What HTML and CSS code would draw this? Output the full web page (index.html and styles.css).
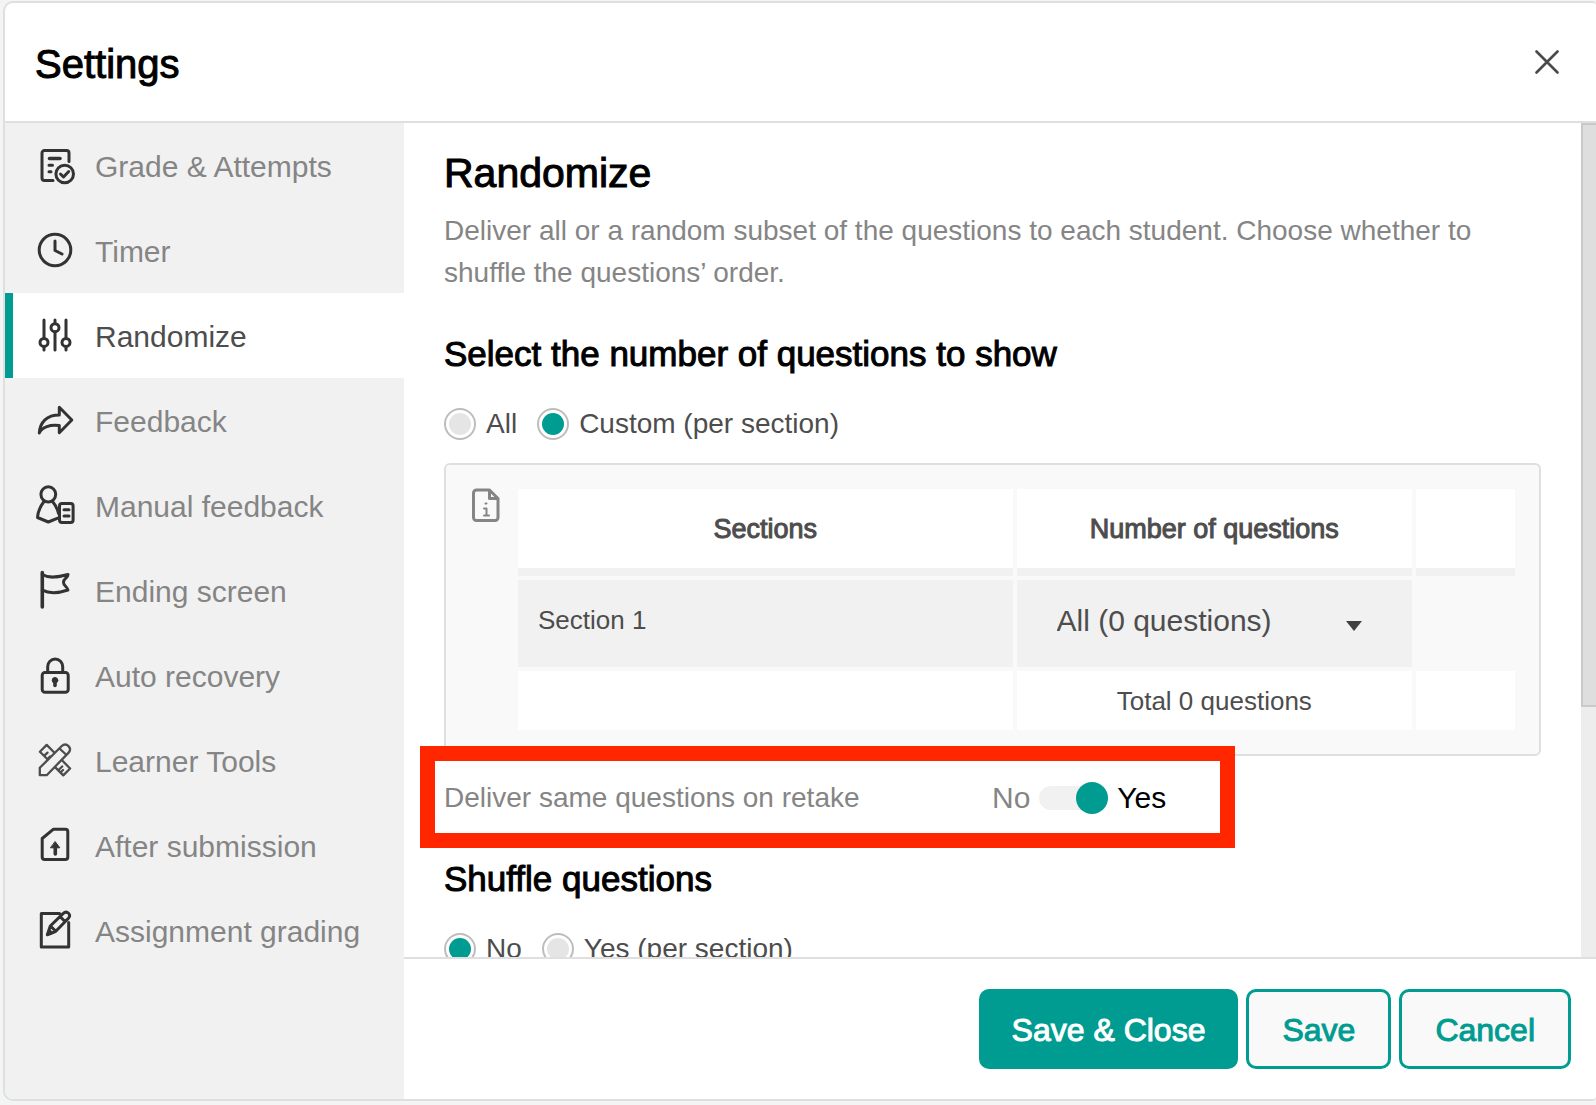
FILE: index.html
```html
<!DOCTYPE html>
<html lang="en">
<head>
    <meta charset="UTF-8">
    <meta name="viewport" content="width=device-width, initial-scale=1.0">
    <title>Settings</title>
    <link rel="stylesheet" href="styles.css">
</head>
<body>
    <div class="modal">
        <header class="modal-header">
            <h1>Settings</h1>
            <button type="button" class="close" aria-label="Close">
                <svg width="24" height="24" viewBox="0 0 24 24"><path d="M1.5 1.5l21 21M22.5 1.5l-21 21"/></svg>
            </button>
        </header>
        <div class="modal-body">
            <nav class="sidebar">
                <a href="#grade">
                    <svg class="icon" viewBox="0 0 40 40"><path d="M34 16.500V8a2.500 2.500 0 0 0-2.500-2.500h-22A2.500 2.500 0 0 0 7 8v25a2.500 2.500 0 0 0 2.500 2.500H18M14 20.300h3.500M14 26.700h2"/><path class="thick" d="M14.500 13.500h10.500"/><circle cx="29.700" cy="29" r="8.800"/><path d="M25.500 29l3 3 5.200-5.500"/></svg>
                    Grade &amp; Attempts
                </a>
                <a href="#timer">
                    <svg class="icon" viewBox="0 0 40 40"><circle cx="20" cy="20" r="15.800"/><path d="M20 11v9.500l7 3.500"/></svg>
                    Timer
                </a>
                <a href="#randomize" class="active">
                    <svg class="icon" viewBox="0 0 40 40"><path d="M9 5v18.500M9 31.500V35M20 5v3.500M20 17v18M31 5v18.500M31 31.500V35"/><circle cx="9" cy="27.400" r="4"/><circle cx="20" cy="12.700" r="4"/><circle cx="31" cy="27.400" r="4"/></svg>
                    Randomize
                </a>
                <a href="#feedback">
                    <svg class="icon" viewBox="0 0 40 40"><path d="M24.300 7.300L36.800 20 24.300 32.700V25.500C15 24.300 7 27 4.300 33 5 22 12 15 24.300 15Z"/></svg>
                    Feedback
                </a>
                <a href="#manual">
                    <svg class="icon" viewBox="0 0 40 40"><ellipse cx="13.300" cy="9.300" rx="7.400" ry="7.600"/><path d="M9 16.500C5.500 21 3 26 2.500 32.500L13.300 37l9.500-3.800M17.500 16.500c3 3.500 5 7.500 6 12"/><rect x="24.500" y="18.500" width="13.600" height="19" rx="2.500"/><path d="M29 24.700h5M29 31h5"/></svg>
                    Manual feedback
                </a>
                <a href="#ending">
                    <svg class="icon" viewBox="0 0 40 40"><path class="thick" d="M7.300 2.500V37"/><path d="M7.300 4.500C14 8.500 22 7.500 33 4.500 33 8 28.500 8.500 28.500 12.300S32 16 33 20C24 23 15 24 7.300 20.200"/></svg>
                    Ending screen
                </a>
                <a href="#recovery">
                    <svg class="icon" viewBox="0 0 40 40"><rect x="7.200" y="17.500" width="26" height="19.700" rx="2.800"/><path d="M12.700 17.500v-6a7.500 7.500 0 0 1 15 0v6"/><circle class="solid" cx="20" cy="25.300" r="2.800"/><path class="thick" d="M20 25v5.500"/></svg>
                    Auto recovery
                </a>
                <a href="#tools">
                    <svg class="icon thin" viewBox="0 0 40 40"><path d="M4.800 35.200v-7.400L26.500 6.300c2.300-2.200 5-2.200 7-.2s1.900 4.700-.3 7L11.700 35.200ZM24.500 8.500l7 6.500M19 12.300L11.700 4.900 4.900 11.700l7.600 7.600M27.500 20.800l7.600 7.700-6.800 6.900-8-8M9.300 15.600l3.200-3M13.500 18l1.500-1.500M24 29.500l3.200-3M26.500 31.500l1.500-1.500"/></svg>
                    Learner Tools
                </a>
                <a href="#submission">
                    <svg class="icon" viewBox="0 0 40 40"><path d="M18.500 4.200H30.300a2.500 2.500 0 0 1 2.500 2.500V32a2.500 2.500 0 0 1-2.500 2.500H9.700A2.500 2.500 0 0 1 7.200 32V13.500Z"/><path class="solid" d="M20.300 16.800l4.500 6h-9Z"/><path class="thick" d="M20.300 22v7"/></svg>
                    After submission
                </a>
                <a href="#grading">
                    <svg class="icon" viewBox="0 0 40 40"><path d="M24.500 3.600H6.300V37h27.400V12.500M12.300 24.800l3-8.800L28 3.600c2-1.800 4-1.800 5.500-.3s1.400 3.400-.3 5.200L20.800 21.300ZM25 6.500l5 5M15.500 16l5.300 5.300"/><path class="solid" d="M12.300 24.800l2-5.800 4 4Z"/></svg>
                    Assignment grading
                </a>
            </nav>
            <main class="main">
                <div class="scroll-area">
                    <div class="content">
                        <h2>Randomize</h2>
                        <p class="description">Deliver all or a random subset of the questions to each student. Choose whether to shuffle the questions’ order.</p>

                        <h3>Select the number of questions to show</h3>
                        <div class="radio-row">
                            <label><input type="radio" name="amount"> All</label>
                            <label><input type="radio" name="amount" checked> Custom (per section)</label>
                        </div>

                        <div class="panel">
                            <svg class="info" width="28" height="34" viewBox="0 0 28 34"><path d="M17.500 2H4.500A3 3 0 0 0 1.500 5v24.500a3 3 0 0 0 3 3h18.500a3 3 0 0 0 3-3V10.500ZM17.500 2v8.500H26"/><path class="mark" d="M12 20.500h2.500v7M12 27.500h5M13.500 15.500h1"/></svg>
                            <table>
                                <colgroup>
                                    <col class="col-section">
                                    <col class="col-number">
                                    <col>
                                </colgroup>
                                <thead>
                                    <tr>
                                        <th>Sections</th>
                                        <th>Number of questions</th>
                                        <th></th>
                                    </tr>
                                </thead>
                                <tbody>
                                    <tr>
                                        <td>Section 1</td>
                                        <td>
                                            <div class="select-wrap">
                                                <select aria-label="Number of questions">
                                                    <option>All (0 questions)</option>
                                                </select>
                                                <svg class="caret" width="16" height="10" viewBox="0 0 16 10"><path d="M0 0h16L8 10Z"/></svg>
                                            </div>
                                        </td>
                                        <td class="blank"></td>
                                    </tr>
                                </tbody>
                                <tfoot>
                                    <tr>
                                        <td></td>
                                        <td>Total 0 questions</td>
                                        <td></td>
                                    </tr>
                                </tfoot>
                            </table>
                        </div>

                        <div class="retake">
                            <label for="retake" class="retake-label">Deliver same questions on retake</label>
                            <div class="toggle">
                                <span class="off">No</span>
                                <input type="checkbox" id="retake" checked>
                                <span>Yes</span>
                            </div>
                            <div class="highlight"></div>
                        </div>

                        <h3>Shuffle questions</h3>
                        <div class="radio-row">
                            <label><input type="radio" name="shuffle" checked> No</label>
                            <label><input type="radio" name="shuffle"> Yes (per section)</label>
                        </div>
                    </div>
                    <div class="scrollbar"><div class="thumb"></div></div>
                </div>
                <footer class="modal-footer">
                    <button type="button" class="btn primary">Save &amp; Close</button>
                    <button type="button" class="btn">Save</button>
                    <button type="button" class="btn">Cancel</button>
                </footer>
            </main>
        </div>
    </div>
</body>
</html>
```
FILE: styles.css
```css
* {
    box-sizing: border-box;
}
body {
    font-family: "Liberation Sans", Arial, sans-serif;
    background-color: #f3f4f4;
    color: #4d4d4d;
    margin: 0;
    padding: 1px 0 0 3px;
    overflow: hidden;
}
h1, h2, h3 {
    color: #000;
    font-weight: normal;
    -webkit-text-stroke: 1px #000; /* medium weight */
    margin: 0;
}
.modal {
    display: flex;
    flex-direction: column;
    height: calc(100vh - 5px);
    background-color: #fff;
    border: 2px solid #dfdfdf;
    border-right: 0;
    border-radius: 10px 4px 4px 10px;
    overflow: hidden;
}
.modal-header {
    display: flex;
    align-items: center;
    justify-content: space-between;
    flex: none;
    height: 120px;
    padding: 0 33px 0 30px;
    border-bottom: 2px solid #dfdfdf;
}
h1 {
    font-size: 40px;
    line-height: 48px;
    padding-top: 4px;
}
.close {
    display: flex;
    padding: 4px;
    border: 0;
    background: none;
    cursor: pointer;
}
.close svg {
    fill: none;
    stroke: #4a4a4a;
    stroke-width: 2.6;
    stroke-linecap: round;
}
.modal-body {
    display: flex;
    flex: 1;
    min-height: 0;
}

/* sidebar */
.sidebar {
    flex: none;
    width: 399px;
    background-color: #f1f1f1;
}
.sidebar a {
    display: flex;
    align-items: center;
    gap: 20px;
    height: 85px;
    padding-top: 2px;
    padding-left: 30px;
    color: #858585;
    font-size: 30px;
    text-decoration: none;
}
.sidebar a.active {
    background-color: #fff;
    border-left: 8px solid #009c91;
    padding-left: 22px;
    color: #4d4d4d;
}
.icon {
    width: 40px;
    height: 40px;
    margin-bottom: 4px;
    fill: none;
    stroke: #333;
    stroke-width: 3;
    stroke-linecap: round;
    stroke-linejoin: round;
}
.icon.thin {
    stroke: #4d4d4d;
    stroke-width: 2.3;
}
.icon .thick {
    stroke-width: 3.6;
}
.icon .solid {
    fill: #333;
    stroke-width: 1;
}

/* content */
.main {
    display: flex;
    flex-direction: column;
    flex: 1;
    min-width: 0;
}
.scroll-area {
    display: flex;
    flex: 1;
    min-height: 0;
    overflow: hidden;
}
.content {
    flex: 1;
    min-width: 0;
    padding: 26px 40px 0;
}
.scrollbar {
    flex: none;
    width: 15px;
    background-color: #ededed;
}
.thumb {
    height: 70%;
    background-color: #dedede;
    border: 2px solid #c9c9c9;
    border-right: 0;
}
h2 {
    font-size: 41px;
    line-height: 48px;
}
.description {
    margin: 13px 0 0;
    color: #858585;
    font-size: 28px;
    line-height: 42px;
}
h3 {
    margin: 40px 0 34px;
    font-size: 35px;
    line-height: 40px;
}
.radio-row {
    display: flex;
    gap: 20px;
    font-size: 28px;
    line-height: 32px;
}
.radio-row label {
    display: flex;
    align-items: center;
    gap: 10px;
}
input[type="radio"] {
    appearance: none;
    width: 32px;
    height: 32px;
    margin: 0;
    padding: 3px;
    border: 2px solid #bdbdbd;
    border-radius: 50%;
    background: #e5e5e5 content-box;
}
input[type="radio"]:checked {
    background-color: #009c91;
}
.panel {
    display: flex;
    align-items: flex-start;
    gap: 14px;
    margin-top: 23px;
    padding: 20px 20px 20px 26px;
    background-color: #f9f9f9;
    border: 2px solid #dfdfdf;
    border-radius: 6px;
}
.info {
    flex: none;
    margin-top: 3px;
    fill: none;
    stroke: #858585;
    stroke-width: 3;
    stroke-linejoin: round;
}
.info .mark {
    stroke-width: 2;
    stroke-linecap: round;
}
table {
    flex: 1;
    table-layout: fixed;
    border-spacing: 4px;
    font-size: 26px;
}
.col-section {
    width: 50%;
}
.col-number {
    width: 40%;
}
th {
    height: 87px;
    padding: 2px 0 0;
    background-color: #fff;
    border-bottom: 8px solid #f1f1f1;
    font-size: 27px;
    font-weight: normal;
    -webkit-text-stroke: 1px #4d4d4d;
}
td {
    padding: 0 20px;
}
tbody td {
    height: 87px;
    padding-bottom: 6px;
    background-color: #f1f1f1;
}
td.blank {
    background: none;
}
tfoot td {
    height: 59px;
    padding-top: 2px;
    background-color: #fff;
    text-align: center;
}
.select-wrap {
    position: relative;
}
select {
    appearance: none;
    width: 100%;
    padding: 4px 20px;
    border: 0;
    background: none;
    color: #4d4d4d;
    font-family: inherit;
    font-size: 30px;
}
.caret {
    position: absolute;
    right: 30px;
    top: 50%;
    fill: #404040;
    pointer-events: none;
}
.retake {
    position: relative;
    display: flex;
    align-items: center;
    height: 42px;
    margin-top: 21px;
    color: #858585;
    font-size: 28px;
}
.retake-label {
    width: 548px;
}
.toggle {
    display: flex;
    align-items: center;
    gap: 9px;
    color: #000;
    font-size: 30px;
}
.toggle .off {
    color: #858585;
}
.toggle input {
    appearance: none;
    display: flex;
    align-items: center;
    justify-content: flex-end;
    width: 69px;
    height: 32px;
    margin: 0;
}
.toggle input::before {
    content: "";
    flex: 1;
    height: 24px;
    margin-right: -16px;
    border-radius: 12px;
    background-color: #f1f1f1;
}
.toggle input::after {
    content: "";
    width: 32px;
    height: 32px;
    border-radius: 50%;
    background-color: #009c91;
}
.highlight {
    position: absolute;
    top: -31px;
    left: -24px;
    width: 815px;
    height: 102px;
    border: 15px solid #ff2600;
    pointer-events: none;
}

/* footer */
.modal-footer {
    display: flex;
    justify-content: flex-end;
    gap: 8px;
    flex: none;
    padding: 30px 25px;
    border-top: 2px solid #dfdfdf;
}
.btn {
    height: 80px;
    padding: 2px 33px 0;
    border: 3px solid #009c91;
    border-radius: 10px;
    background-color: #f9f9f9;
    color: #009c91;
    font-family: inherit;
    font-size: 32px;
    -webkit-text-stroke: 1px currentColor;
    cursor: pointer;
}
.btn.primary {
    border-width: 0;
    background-color: #009c91;
    color: #fff;
}
```
